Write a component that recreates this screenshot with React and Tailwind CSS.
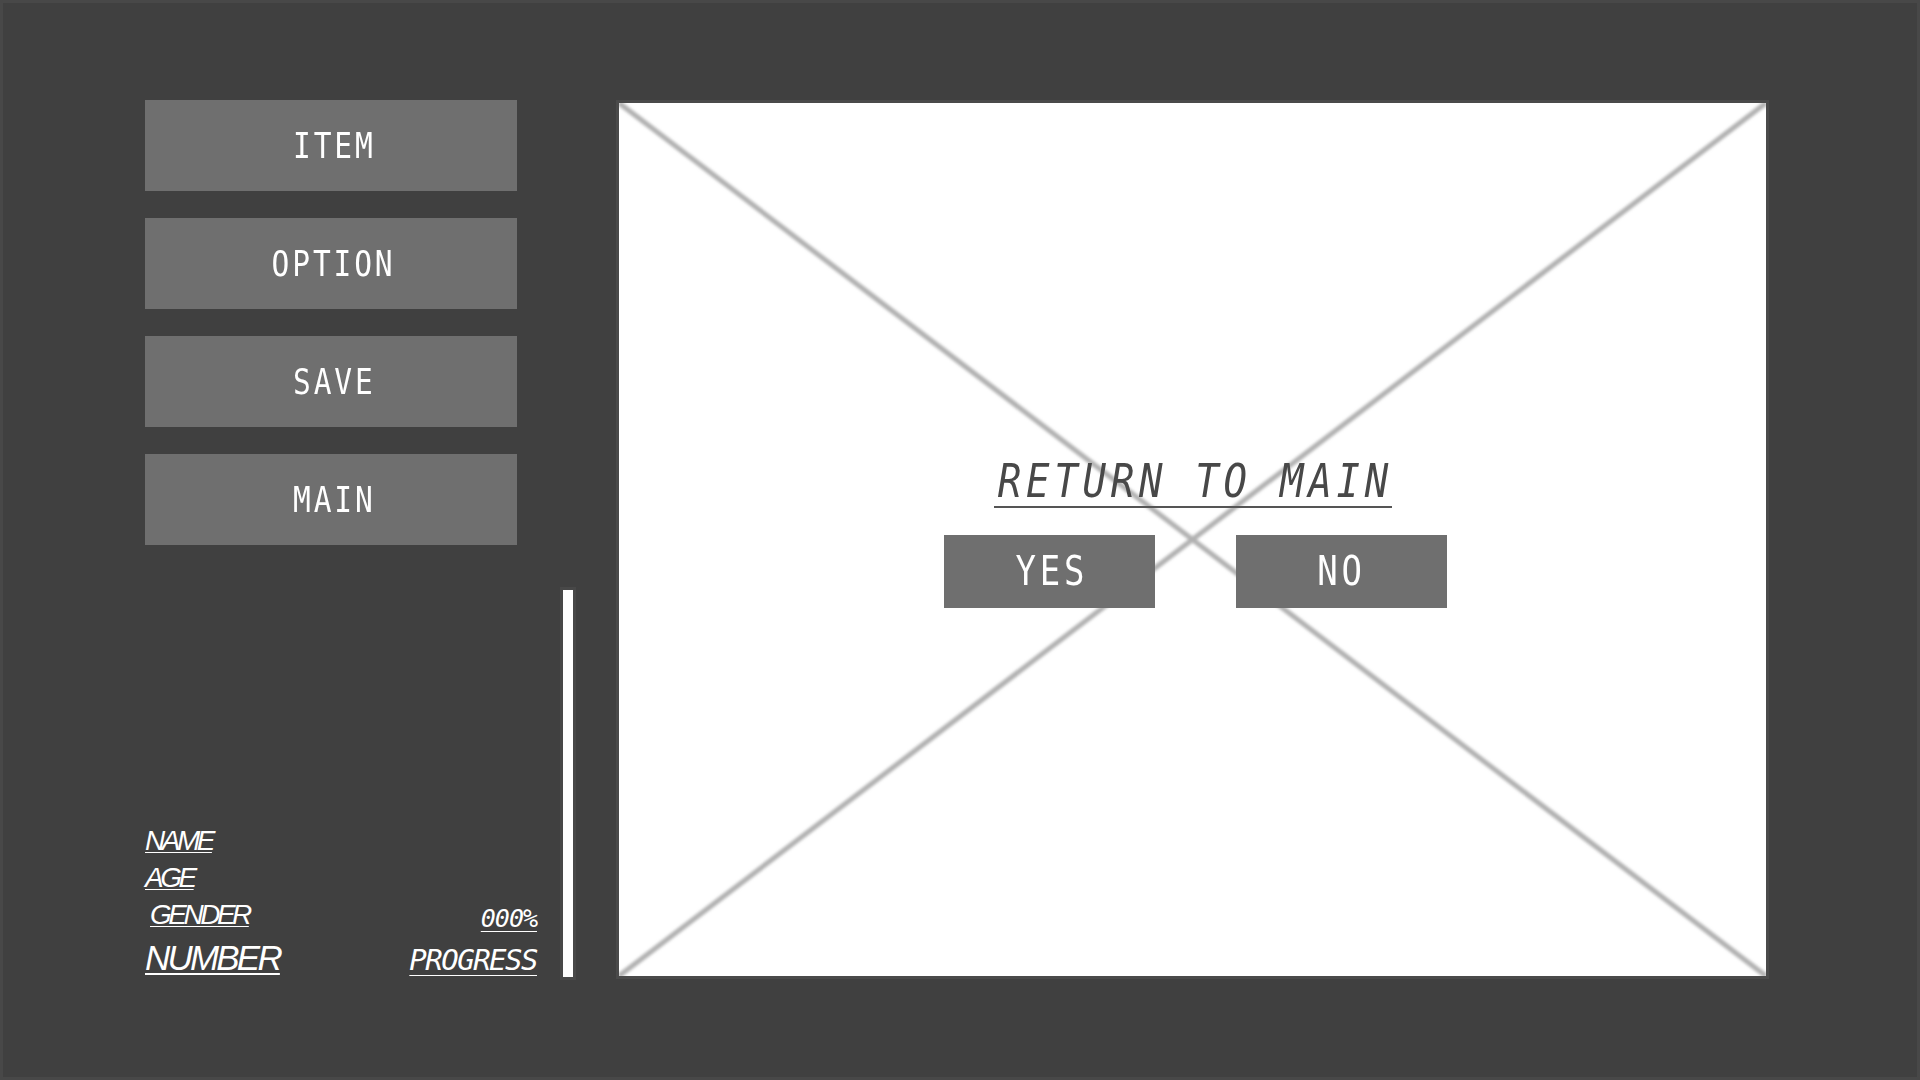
export default function App() {
    const menu = ['ITEM', 'OPTION', 'SAVE', 'MAIN'];

    return (
        <div className="w-[1920px] h-[1080px] bg-[#404040] border-[3px] border-[#484848] flex pl-[142px] pt-[97px]">

            {/* Sidebar */}
            <div className="flex h-[880px]">
                <div className="w-[392px] flex flex-col justify-between pb-[2px]">
                    <div className="flex flex-col gap-[27px] w-[372px]">
                        {menu.map((m) => (
                            <div key={m}
                                className="h-[91px] bg-[#6f6f6f] flex items-center justify-center pl-[6px] text-white font-['DejaVu_Sans_Mono',monospace]">
                                <span className="inline-block text-[36px] tracking-[3.5px] scale-x-[0.82]">{m}</span>
                            </div>
                        ))}
                    </div>

                    {/* Player info */}
                    <div className="flex justify-between items-end text-white">
                        <div className="flex flex-col items-start italic font-['Liberation_Sans',Arial,sans-serif]">
                            <span className="text-[28px] leading-[37px] tracking-[-3.5px] underline decoration-1 underline-offset-[2px]">NAME</span>
                            <span className="text-[28px] leading-[37px] tracking-[-3.5px] underline decoration-1 underline-offset-[2px]">AGE</span>
                            <span className="text-[28px] leading-[37px] tracking-[-3.5px] underline decoration-1 underline-offset-[2px] ml-[5px]">GENDER</span>
                            <span className="text-[35px] leading-[40px] tracking-[-2.8px] underline decoration-2 underline-offset-[3px] mt-[5px]">NUMBER</span>
                        </div>
                        <div className="flex flex-col items-end italic mb-[1px] font-['DejaVu_Sans_Mono',monospace]">
                            <span className="text-[25px] leading-[30px] tracking-[-1px] underline decoration-1 underline-offset-[4px]">000%</span>
                            <span className="text-[29px] leading-[34px] tracking-[-1.5px] underline decoration-1 underline-offset-[5px] mt-[9px]">PROGRESS</span>
                        </div>
                    </div>
                </div>

                {/* Progress bar */}
                <div className="self-end ml-[23px] w-[16px] h-[393px] bg-white border-[3px] border-[#484848]" />
            </div>

            {/* Main view */}
            <div className="relative ml-[40px] w-[1153px] h-[879px] bg-white border-[3px] border-[#4a4a4a] flex items-center justify-center">
                <svg className="absolute inset-0 w-full h-full" aria-hidden="true">
                    <defs>
                        <filter id="soft" x="-5%" y="-5%" width="110%" height="110%">
                            <feGaussianBlur stdDeviation="1.6" />
                        </filter>
                    </defs>
                    <g stroke="#b0b0b0" strokeWidth="5" filter="url(#soft)">
                        <line x1="0" y1="0" x2="100%" y2="100%" />
                        <line x1="100%" y1="0" x2="0" y2="100%" />
                    </g>
                </svg>

                <div className="relative flex flex-col items-center mb-[15px]">
                    <div className="border-b-2 border-[#555555] w-[398px] flex justify-center">
                        <span className="inline-block shrink-0 whitespace-nowrap text-[46px] leading-[49px] tracking-[5.5px] scale-x-[0.85] ml-[6px] italic text-[#484848] font-['DejaVu_Sans_Mono',monospace]">
                            RETURN TO MAIN
                        </span>
                    </div>
                    <div className="flex gap-[81px] mt-[27px] pl-[6px]">
                        <div className="w-[211px] h-[73px] bg-[#6f6f6f] flex items-center justify-center pl-[4px] text-white font-['DejaVu_Sans_Mono',monospace]">
                            <span className="inline-block text-[40px] tracking-[4.5px] scale-x-[0.85]">YES</span>
                        </div>
                        <div className="w-[211px] h-[73px] bg-[#6f6f6f] flex items-center justify-center text-white font-['DejaVu_Sans_Mono',monospace]">
                            <span className="inline-block text-[40px] tracking-[4.5px] scale-x-[0.85]">NO</span>
                        </div>
                    </div>
                </div>
            </div>
        </div>
    );
}
